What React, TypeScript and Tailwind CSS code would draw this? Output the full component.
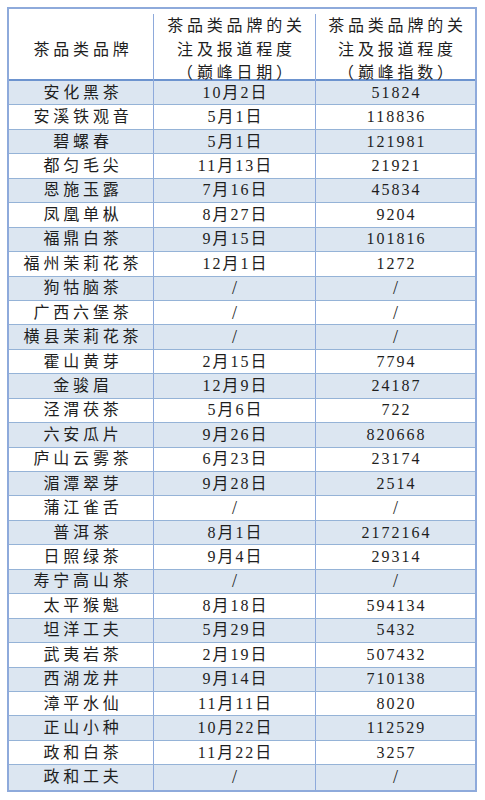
const rows: [string, string, string][] = [
  ["安化黑茶", "10月2日", "51824"],
  ["安溪铁观音", "5月1日", "118836"],
  ["碧螺春", "5月1日", "121981"],
  ["都匀毛尖", "11月13日", "21921"],
  ["恩施玉露", "7月16日", "45834"],
  ["凤凰单枞", "8月27日", "9204"],
  ["福鼎白茶", "9月15日", "101816"],
  ["福州茉莉花茶", "12月1日", "1272"],
  ["狗牯脑茶", "/", "/"],
  ["广西六堡茶", "/", "/"],
  ["横县茉莉花茶", "/", "/"],
  ["霍山黄芽", "2月15日", "7794"],
  ["金骏眉", "12月9日", "24187"],
  ["泾渭茯茶", "5月6日", "722"],
  ["六安瓜片", "9月26日", "820668"],
  ["庐山云雾茶", "6月23日", "23174"],
  ["湄潭翠芽", "9月28日", "2514"],
  ["蒲江雀舌", "/", "/"],
  ["普洱茶", "8月1日", "2172164"],
  ["日照绿茶", "9月4日", "29314"],
  ["寿宁高山茶", "/", "/"],
  ["太平猴魁", "8月18日", "594134"],
  ["坦洋工夫", "5月29日", "5432"],
  ["武夷岩茶", "2月19日", "507432"],
  ["西湖龙井", "9月14日", "710138"],
  ["漳平水仙", "11月11日", "8020"],
  ["正山小种", "10月22日", "112529"],
  ["政和白茶", "11月22日", "3257"],
  ["政和工夫", "/", "/"],
];

const font = "font-['Liberation_Serif','Noto_Sans_CJK_SC',serif]";

function Value({ v }: { v: string }) {
  // 无数据的格子用斜杠，原图里斜杠偏大
  if (v === "/") return <span className="text-[18px]">/</span>;
  return <span>{v}</span>;
}

export default function App() {
  return (
    <div className={`min-h-[800px] bg-white pl-[7px] pt-[7px] text-[#1e1e1e] ${font}`}>
      <div className="w-[470px] border-2 border-[#8eaadb]">
        {/* 表头 */}
        <div className="grid h-[72px] grid-cols-[144px_162px_160px] border-b-2 border-[#6d94cf] pt-[5px] text-[16px] leading-[23.5px] tracking-[3.8px]">
          <div className="flex items-center justify-center pl-[4px]">茶品类品牌</div>
          <div className="flex flex-col items-center justify-center border-l border-[#8eaadb] pl-[4px] text-center">
            <span>茶品类品牌的关</span>
            <span>注及报道程度</span>
            <span>（巅峰日期）</span>
          </div>
          <div className="flex flex-col items-center justify-center border-l border-[#8eaadb] pl-[4px] text-center">
            <span>茶品类品牌的关</span>
            <span>注及报道程度</span>
            <span>（巅峰指数）</span>
          </div>
        </div>

        {rows.map(([name, date, peak], i) => (
          <div
            key={name}
            className={`grid h-[24.45px] grid-cols-[144px_162px_160px] text-[16px] leading-none ${
              i < rows.length - 1 ? "border-b border-[#95b3d7]" : ""
            } ${i % 2 === 0 ? "bg-[#dce6f1]" : "bg-white"}`}
          >
            <div className="flex items-center justify-center pl-[4px] tracking-[3.8px]">{name}</div>
            <div className="flex items-center justify-center border-l border-[#8eaadb] pl-[2px] tracking-[2px]">
              <Value v={date} />
            </div>
            <div className="flex items-center justify-center border-l border-[#8eaadb] pl-[2px] tracking-[2px]">
              <Value v={peak} />
            </div>
          </div>
        ))}
      </div>
    </div>
  );
}
